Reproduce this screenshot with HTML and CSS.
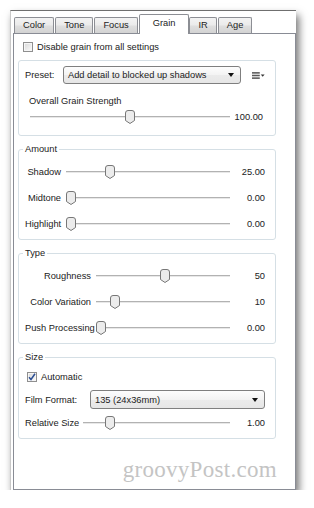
FILE: index.html
```html
<!DOCTYPE html>
<html lang="en">
<head>
    <meta charset="UTF-8">
    <title>Grain</title>
    <link rel="stylesheet" href="styles.css">
</head>
<body>
    <div class="window">
        <div class="tabs">
            <div class="tab">Color</div>
            <div class="tab">Tone</div>
            <div class="tab">Focus</div>
            <div class="tab tab-active">Grain</div>
            <div class="tab">IR</div>
            <div class="tab">Age</div>
        </div>

        <div class="panel">
            <label class="check-row">
                <span class="check"></span>
                Disable grain from all settings
            </label>

            <div class="group group-preset">
                <div class="select-row">
                    <span class="select-label preset-label">Preset:</span>
                    <div class="select select-preset">
                        <span>Add detail to blocked up shadows</span>
                        <span class="arrow"></span>
                    </div>
                    <svg class="menu-icon" width="13" height="9" viewBox="0 0 13 9">
                        <rect x="0" y="1" width="8" height="1.6" fill="#5a5a5a"/>
                        <rect x="0" y="3.7" width="8" height="1.6" fill="#5a5a5a"/>
                        <rect x="0" y="6.4" width="8" height="1.6" fill="#5a5a5a"/>
                        <path d="M9 3.5 H13 L11 5.8 Z" fill="#333"/>
                    </svg>
                </div>
                <div class="overall-label">Overall Grain Strength</div>
                <div class="slider-row slider-overall">
                    <div class="slider">
                        <svg class="thumb" style="--pos: 0.5" width="10" height="14" viewBox="0 0 10 14"><path d="M0.5 3 Q0.5 0.5 3 0.5 H7 Q9.5 0.5 9.5 3 V10.5 L5 13.5 L0.5 10.5 Z" fill="#ececec" stroke="#777"/></svg>
                    </div>
                    <span class="value">100.00</span>
                </div>
            </div>

            <fieldset class="group group-amount">
                <legend>Amount</legend>
                <div class="slider-row">
                    <span class="slider-label">Shadow</span>
                    <div class="slider">
                        <svg class="thumb" style="--pos: 0.25" width="10" height="14" viewBox="0 0 10 14"><path d="M0.5 3 Q0.5 0.5 3 0.5 H7 Q9.5 0.5 9.5 3 V10.5 L5 13.5 L0.5 10.5 Z" fill="#ececec" stroke="#777"/></svg>
                    </div>
                    <span class="value">25.00</span>
                </div>
                <div class="slider-row">
                    <span class="slider-label">Midtone</span>
                    <div class="slider">
                        <svg class="thumb" style="--pos: 0" width="10" height="14" viewBox="0 0 10 14"><path d="M0.5 3 Q0.5 0.5 3 0.5 H7 Q9.5 0.5 9.5 3 V10.5 L5 13.5 L0.5 10.5 Z" fill="#ececec" stroke="#777"/></svg>
                    </div>
                    <span class="value">0.00</span>
                </div>
                <div class="slider-row">
                    <span class="slider-label">Highlight</span>
                    <div class="slider">
                        <svg class="thumb" style="--pos: 0" width="10" height="14" viewBox="0 0 10 14"><path d="M0.5 3 Q0.5 0.5 3 0.5 H7 Q9.5 0.5 9.5 3 V10.5 L5 13.5 L0.5 10.5 Z" fill="#ececec" stroke="#777"/></svg>
                    </div>
                    <span class="value">0.00</span>
                </div>
            </fieldset>

            <fieldset class="group group-type">
                <legend>Type</legend>
                <div class="slider-row">
                    <span class="slider-label">Roughness</span>
                    <div class="slider">
                        <svg class="thumb" style="--pos: 0.52" width="10" height="14" viewBox="0 0 10 14"><path d="M0.5 3 Q0.5 0.5 3 0.5 H7 Q9.5 0.5 9.5 3 V10.5 L5 13.5 L0.5 10.5 Z" fill="#ececec" stroke="#777"/></svg>
                    </div>
                    <span class="value">50</span>
                </div>
                <div class="slider-row">
                    <span class="slider-label">Color Variation</span>
                    <div class="slider">
                        <svg class="thumb" style="--pos: 0.11" width="10" height="14" viewBox="0 0 10 14"><path d="M0.5 3 Q0.5 0.5 3 0.5 H7 Q9.5 0.5 9.5 3 V10.5 L5 13.5 L0.5 10.5 Z" fill="#ececec" stroke="#777"/></svg>
                    </div>
                    <span class="value">10</span>
                </div>
                <div class="slider-row">
                    <span class="slider-label">Push Processing</span>
                    <div class="slider">
                        <svg class="thumb" style="--pos: 0" width="10" height="14" viewBox="0 0 10 14"><path d="M0.5 3 Q0.5 0.5 3 0.5 H7 Q9.5 0.5 9.5 3 V10.5 L5 13.5 L0.5 10.5 Z" fill="#ececec" stroke="#777"/></svg>
                    </div>
                    <span class="value">0.00</span>
                </div>
            </fieldset>

            <fieldset class="group group-size">
                <legend>Size</legend>
                <label class="check-row check-auto">
                    <span class="check">
                        <svg width="8" height="8" viewBox="0 0 8 8"><path d="M1 4.2 L3 6.5 L7 0.8" fill="none" stroke="#2c4f94" stroke-width="1.5"/></svg>
                    </span>
                    Automatic
                </label>
                <div class="select-row select-row-film">
                    <span class="select-label film-label">Film Format:</span>
                    <div class="select select-film">
                        <span>135 (24x36mm)</span>
                        <span class="arrow"></span>
                    </div>
                </div>
                <div class="slider-row">
                    <span class="slider-label">Relative Size</span>
                    <div class="slider">
                        <svg class="thumb" style="--pos: 0.16" width="10" height="14" viewBox="0 0 10 14"><path d="M0.5 3 Q0.5 0.5 3 0.5 H7 Q9.5 0.5 9.5 3 V10.5 L5 13.5 L0.5 10.5 Z" fill="#ececec" stroke="#777"/></svg>
                    </div>
                    <span class="value">1.00</span>
                </div>
            </fieldset>

            <div class="watermark">groovyPost.com</div>
        </div>
    </div>
</body>
</html>
```

FILE: styles.css
```css
body {
    margin: 0;
    background-color: #ffffff;
    font-family: 'Liberation Sans', Arial, sans-serif;
    font-size: 9.3px;
    color: #222;
}
.window {
    box-sizing: border-box;
    width: 286px;
    height: 480px;
    margin: 10px 0 0 10px;
    padding-left: 2px;
    border-top: 1px solid #6f6f6f;
    border-left: 1px solid #c9c9c9;
    background-color: #ffffff;
    box-shadow: 3px 5px 8px rgba(0, 0, 0, 0.55);
    display: flex;
    flex-direction: column;
}
.tabs {
    display: flex;
    align-items: flex-end;
    height: 22px;
    padding-left: 1px;
}
.tab {
    box-sizing: border-box;
    height: 16px;
    line-height: 15px;
    padding: 0 8px;
    margin-right: 1px;
    border: 1px solid #8c8e94;
    border-bottom: none;
    border-radius: 2px 2px 0 0;
    background: linear-gradient(#f3f3f3, #ebebeb 45%, #dedede 55%, #d3d3d3);
}
.tab-active {
    position: relative;
    height: 20px;
    line-height: 16px;
    padding: 0 13px;
    margin: 0 0 -1px 0;
    background: #ffffff;
}
.panel {
    flex: 1;
    box-sizing: border-box;
    border: 1px solid #898c95;
    padding: 7px 0 0 4px;
    display: flex;
    flex-direction: column;
}
.check-row {
    display: flex;
    align-items: center;
    gap: 4px;
    height: 11px;
    margin-left: 5px;
}
.check {
    box-sizing: border-box;
    width: 10px;
    height: 10px;
    border: 1px solid #8f8f8f;
    background: linear-gradient(135deg, #d8d8d8, #fbfbfb);
    box-shadow: inset 0 0 0 1px #f6f6f6;
    display: flex;
    align-items: center;
    justify-content: center;
}
.group {
    box-sizing: border-box;
    width: 258px;
    margin: 0;
    border: 1px solid #d5dfe5;
    border-radius: 3px;
}
.group-preset {
    margin-top: 8px;
    padding: 5px 10px 11px 6px;
}
fieldset.group {
    min-width: 0;
    margin-top: 7px;
    padding: 10px 10px 8px 6px;
    display: flex;
    flex-direction: column;
    gap: 12px;
}
legend {
    padding: 0 2px;
    margin-left: -2px;
    line-height: 12px;
}
.select-row {
    display: flex;
    align-items: center;
    height: 18px;
}
.select-label {
    flex: none;
}
.preset-label {
    width: 38px;
}
.film-label {
    width: 65px;
}
.select {
    box-sizing: border-box;
    height: 18px;
    padding: 0 6px 0 4px;
    border: 1px solid #7f7f7f;
    border-radius: 3px;
    background: linear-gradient(#fdfdfd, #f3f3f3 50%, #ebebeb 51%, #e6e6e6);
    display: flex;
    align-items: center;
    justify-content: space-between;
}
.select-preset {
    width: 183px;
}
.select-film {
    width: 178px;
    height: 19px;
}
.select-row-film {
    height: 19px;
}
.arrow {
    width: 0;
    height: 0;
    border-left: 3.5px solid transparent;
    border-right: 3.5px solid transparent;
    border-top: 4px solid #111;
}
.menu-icon {
    margin-left: 11px;
}
.overall-label {
    margin-top: 11px;
    padding-left: 4px;
    line-height: 12px;
}
.slider-row {
    display: grid;
    grid-template-columns: var(--label-width) 1fr 35px;
    align-items: center;
    height: 14px;
}
.group-amount {
    --label-width: 41px;
}
.group-type {
    --label-width: 71px;
}
.group-size {
    --label-width: 58px;
}
.slider-overall {
    grid-template-columns: 1fr 33px;
    margin: 3px 2px 0 5px;
}
.slider-label {
    box-sizing: border-box;
    padding-right: 5px;
    text-align: right;
    white-space: nowrap;
}
.group-size .slider-label {
    text-align: left;
}
.slider {
    position: relative;
    height: 14px;
}
.slider::before {
    content: '';
    position: absolute;
    left: 0;
    right: 0;
    top: 6px;
    border-top: 1px solid #b2b2b2;
    border-bottom: 1px solid #e8e8e8;
}
.thumb {
    position: absolute;
    top: 0;
    left: calc((100% - 10px) * var(--pos));
}
.value {
    text-align: right;
}
fieldset.group-size {
    padding-top: 8px;
    gap: 7px;
}
.check-auto {
    height: 12px;
    margin-left: 2px;
}
.watermark {
    margin-top: 18px;
    padding-right: 18px;
    text-align: right;
    font-family: 'Liberation Serif', 'Times New Roman', serif;
    font-size: 23px;
    line-height: 26px;
    letter-spacing: 0.3px;
    color: #c4c4c4;
}
```
